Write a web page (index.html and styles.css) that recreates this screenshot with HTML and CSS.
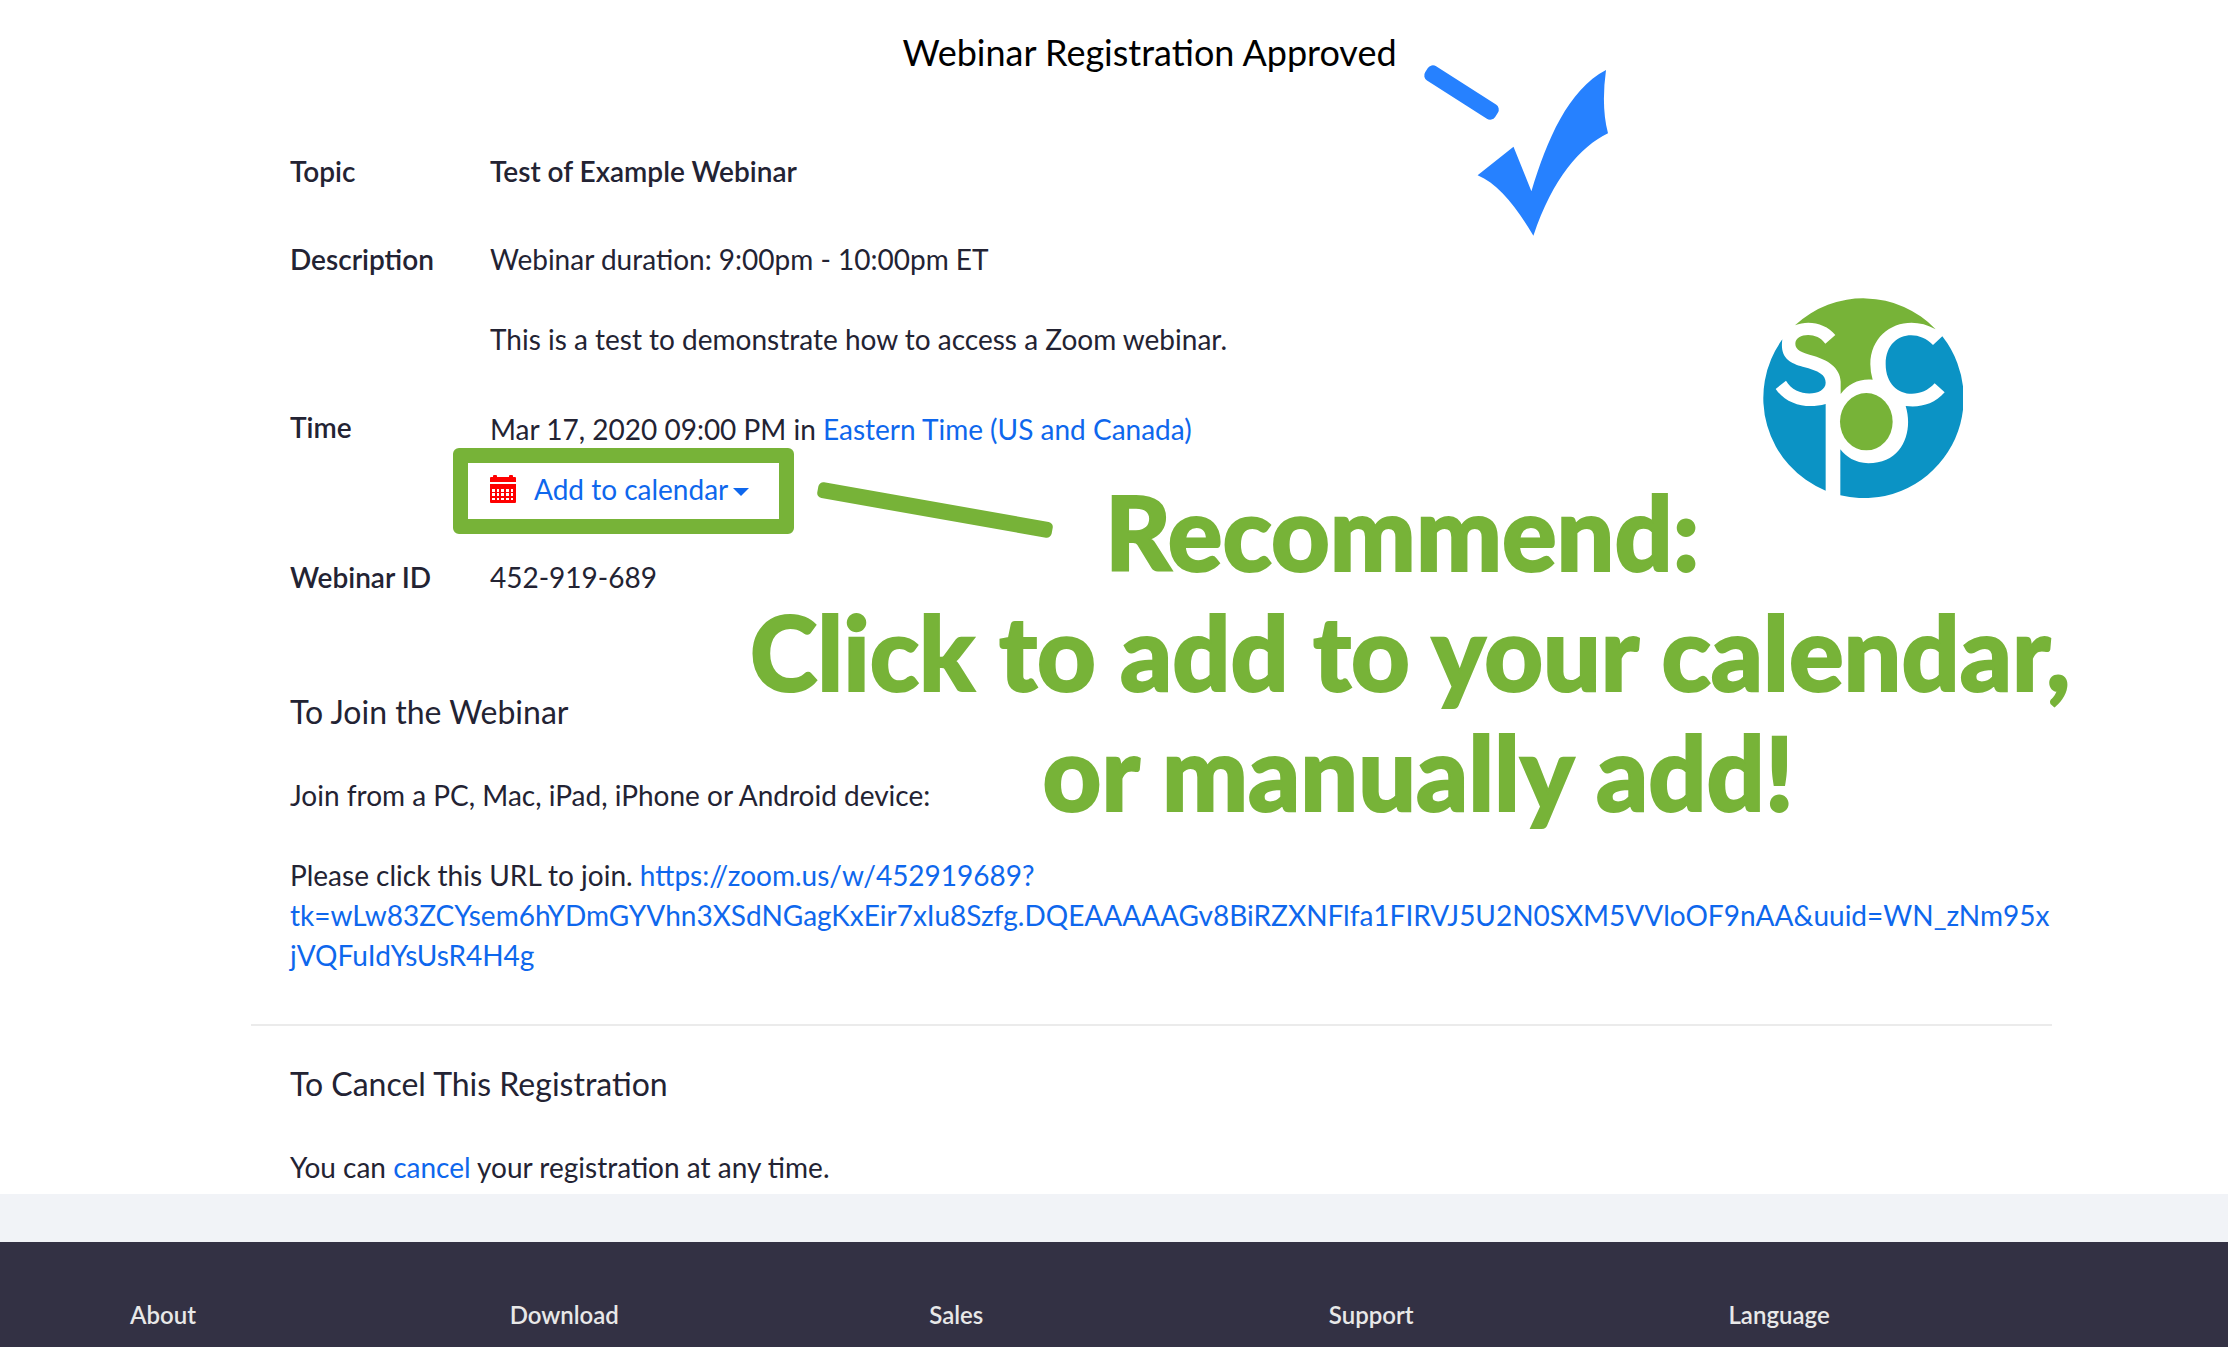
FILE: index.html
```html
<!DOCTYPE html>
<html lang="en">
<head>
    <meta charset="utf-8">
    <title>Webinar Registration Approved</title>
    <link rel="stylesheet" href="styles.css">
</head>
<body>
    <main class="page">
        <div class="content">
            <h1>Webinar Registration Approved</h1>

            <dl class="details">
                <dt>Topic</dt>
                <dd class="topic">Test of Example Webinar</dd>

                <dt>Description</dt>
                <dd>
                    <p>Webinar duration: 9:00pm - 10:00pm ET</p>
                    <p>This is a test to demonstrate how to access a Zoom webinar.</p>
                </dd>

                <dt>Time</dt>
                <dd>
                    <div class="time">Mar 17, 2020 09:00 PM in <a href="#timezone">Eastern Time (US and Canada)</a></div>
                    <div class="calendar">
                        <svg class="calendar-icon" viewBox="0 0 26 28" aria-hidden="true">
                            <path fill="#ff0000" fill-rule="evenodd" d="M0 7V3q0-1 1-1h2V1q0-1 1-1h2q1 0 1 1v1h12V1q0-1 1-1h2q1 0 1 1v1h2q1 0 1 1v4zM0 9h26v18q0 1-1 1H1q-1 0-1-1zM2 14v3h3v-3zM7 14v3h2v-3zM11 14v3h3v-3zM16 14v3h3v-3zM21 14v3h2v-3zM2 18v3h3v-3zM7 18v3h2v-3zM11 18v3h3v-3zM16 18v3h3v-3zM21 18v3h2v-3zM2 23v2h3v-2zM7 23v2h2v-2zM11 23v2h3v-2zM16 23v2h3v-2zM21 23v2h2v-2z"/>
                        </svg>
                        <button type="button" class="calendar-button">Add to calendar<span class="caret"></span></button>
                        <div class="highlight"></div>
                    </div>
                </dd>

                <dt>Webinar ID</dt>
                <dd>452-919-689</dd>
            </dl>

            <section class="join">
                <h2>To Join the Webinar</h2>
                <p>Join from a PC, Mac, iPad, iPhone or Android device:</p>
                <p>Please click this URL to join. <a href="#join">https://zoom.us/w/452919689?tk=wLw83ZCYsem6hYDmGYVhn3XSdNGagKxEir7xIu8Szfg.DQEAAAAAGv8BiRZXNFlfa1FIRVJ5U2N0SXM5VVloOF9nAA&amp;uuid=WN_zNm95xjVQFuIdYsUsR4H4g</a></p>
            </section>

            <section class="cancel">
                <h2>To Cancel This Registration</h2>
                <p>You can <a href="#cancel">cancel</a> your registration at any time.</p>
            </section>
        </div>

        <!-- notes drawn over the page -->
        <svg class="check" viewBox="1420 60 192 180" aria-hidden="true">
            <rect x="1420" y="84" width="83" height="17" rx="6" transform="rotate(32.5 1461.5 92.5)"/>
            <path d="M1606 70Q1601 107 1608 133.300C1580 147 1553 178 1533.400 235.700C1515 205 1498 184 1477.600 175.300L1513.500 146.700L1531.400 191.300C1547 140 1568 90 1606 70z"/>
        </svg>

        <svg class="logo" viewBox="69 54 600 600" role="img" aria-label="SPC">
            <path fill="#77b338" d="M165 136A300 300 0 0 1 587 148C500 98 392 146 391 253Q391 277 398 299C360 295 325 310 302 342V305C300 262 262 240 222 228C184 217 166 210 166 191C166 160 230 152 256 191L286 165C258 130 205 119 165 136z"/>
            <ellipse fill="#77b338" cx="379" cy="425" rx="79" ry="86"/>
            <path fill="#0b93c5" d="M127 178C119 232 148 249 188 260C238 273 257 284 257 308C257 348 168 356 138 302L107 327C140 374 200 388 257 372V632A300 300 0 0 1 127 178z"/>
            <path fill="#0b93c5" d="M607 169L579 195C530 142 437 160 437 252C437 348 534 366 584 310L614 337C582 374 540 383 497 378C520 452 490 550 385 550C345 549 318 530 301 508V646A300 300 0 0 0 607 169z"/>
        </svg>

        <svg class="pointer" viewBox="815 478 240 64" aria-hidden="true">
            <rect x="816" y="502" width="238" height="16" rx="5" transform="rotate(10 935 510)"/>
        </svg>

        <div class="callout">
            <p class="callout-title">Recommend:</p>
            <p class="callout-text">Click to add to your calendar,</p>
            <p>or manually add!</p>
        </div>
    </main>

    <footer class="footer">
        <h3>About</h3>
        <h3>Download</h3>
        <h3>Sales</h3>
        <h3>Support</h3>
        <h3>Language</h3>
    </footer>
</body>
</html>
```

FILE: styles.css
```css
* {
    box-sizing: border-box;
}
body {
    margin: 0;
    font-family: Lato, sans-serif;
    font-size: 28px;
    line-height: 40px;
    color: #232333;
    background-color: #f1f3f7;
}
h1, h2, h3, p, dl, dd {
    margin: 0;
}
a {
    color: #0e67ed;
    text-decoration: none;
}
.page {
    position: relative;
    background-color: #ffffff;
    padding: 28px 176px 7px 251px;
    margin-bottom: 48px;
}
h1 {
    padding-right: 4px;
    font-size: 36px;
    font-weight: 400;
    line-height: 48px;
    text-align: center;
    color: #000000;
}
h2 {
    font-size: 32px;
    font-weight: 400;
    line-height: 44px;
    margin-bottom: 41px;
}

/* webinar details */
.details {
    display: grid;
    grid-template-columns: 200px 1fr;
    row-gap: 48px;
    padding-left: 39px;
    margin-top: 75px;
}
dt, .topic {
    font-weight: 600;
}
.content p + p {
    margin-top: 40px;
}
.time {
    line-height: 44px;
}
.calendar {
    position: relative;
    display: flex;
    align-items: center;
    width: fit-content;
    margin-top: 18px;
}
.calendar-icon {
    width: 26px;
    height: 28px;
    margin-right: 18px;
}
.calendar-button {
    display: flex;
    align-items: center;
    gap: 5px;
    padding: 0;
    border: none;
    background: none;
    font: inherit;
    color: #0e67ed;
    cursor: pointer;
}
.caret {
    border-top: 8px solid #0e67ed;
    border-left: 8px solid transparent;
    border-right: 8px solid transparent;
    margin-top: 6px;
}
.highlight {
    position: absolute;
    top: -21px;
    bottom: -25px;
    left: -37px;
    right: -45px;
    border: 15px solid #77b338;
    border-radius: 6px;
    pointer-events: none;
}

.join {
    padding: 0 0 49px 39px;
    margin-top: 93px;
    overflow-wrap: break-word;
}
.cancel {
    padding: 36px 0 0 39px;
    border-top: 2px solid #ebebeb;
}

/* notes over the page */
.check, .logo, .pointer, .callout {
    position: absolute;
}
.check {
    top: 60px;
    left: 1420px;
    width: 192px;
    height: 180px;
    fill: #2681ff;
}
.logo {
    top: 298px;
    left: 1763px;
    width: 200px;
    height: 200px;
}
.pointer {
    top: 478px;
    left: 815px;
    width: 240px;
    height: 64px;
    fill: #77b338;
}
.callout {
    top: 472px;
    left: 750px;
    font-size: 102px;
    font-weight: 900;
    line-height: 120px;
    text-align: center;
    white-space: nowrap;
    color: #77b338;
    -webkit-text-stroke: 2px #77b338;
}
.callout-title {
    padding-right: 32px;
}
.callout-text {
    padding-right: 16px;
}

.footer {
    display: grid;
    grid-template-columns: 19fr 21fr 20fr 20fr 25fr;
    padding: 58px 0 17px 130px;
    background-color: #333144;
    color: #e8e8e8;
}
.footer h3 {
    font-size: 24px;
    font-weight: 600;
    line-height: 30px;
}
```
